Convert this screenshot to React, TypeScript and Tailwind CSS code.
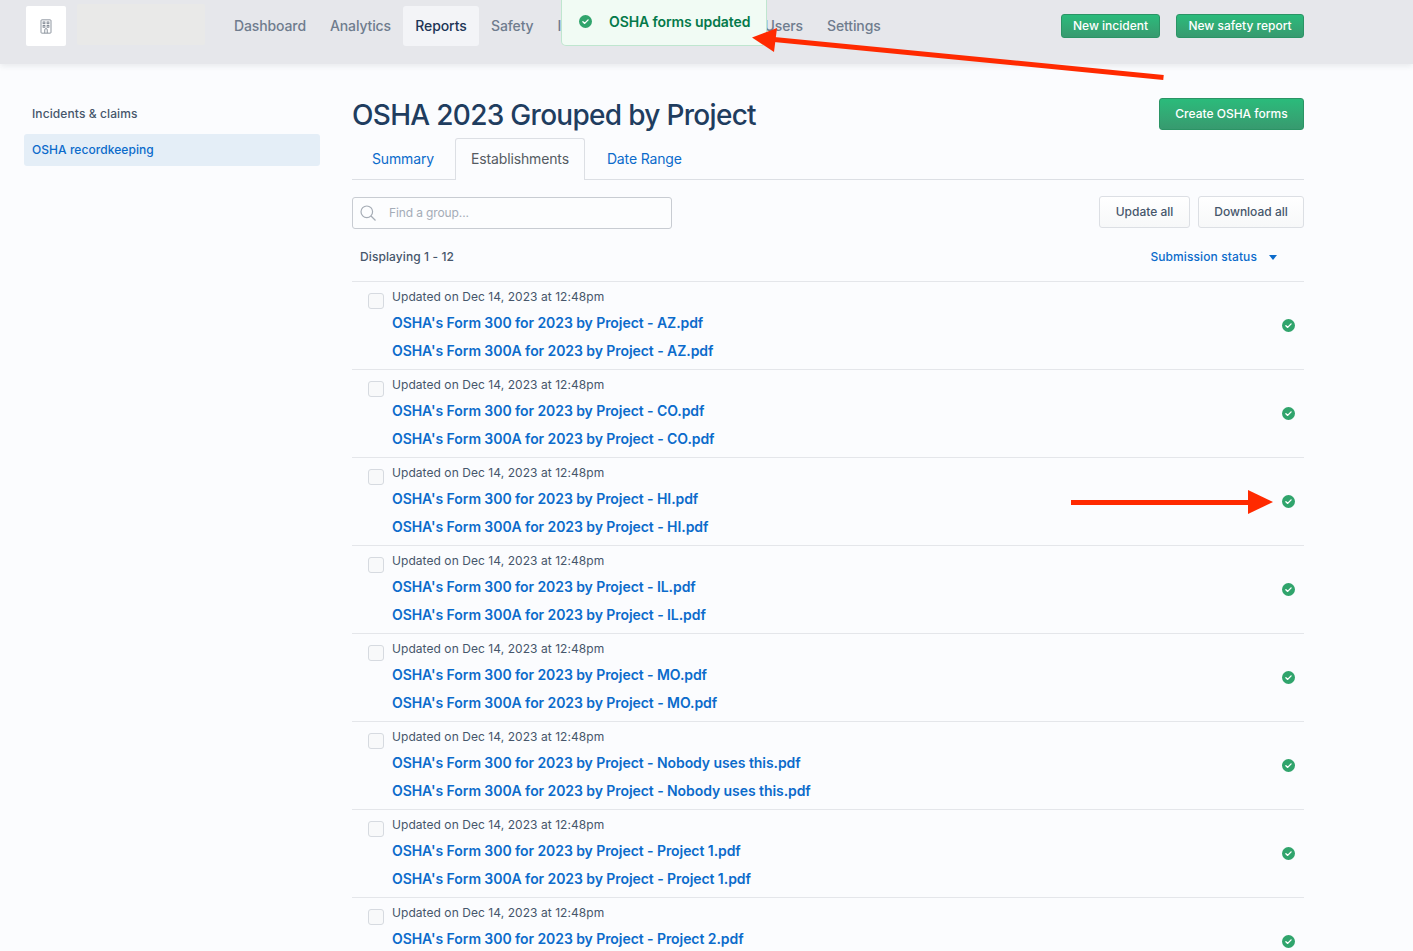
import React from "react";

const projects = ["AZ", "CO", "HI", "IL", "MO", "Nobody uses this", "Project 1", "Project 2"];

function Check({ className }: { className: string }) {
  return (
    <svg viewBox="0 0 16 16" className={className}>
      <circle cx="8" cy="8" r="8" fill="#30a46c" />
      <path d="M4.8 8.3 7 10.3 11.2 6" fill="none" stroke="#fff" strokeWidth="1.7" strokeLinecap="round" strokeLinejoin="round" />
    </svg>
  );
}

function GreenButton({ children, className }: { children: React.ReactNode; className: string }) {
  return (
    <button className={`rounded-[3px] border border-[#2b9465] bg-gradient-to-b from-[#2abb7b] to-[#379a6f] text-[12px] text-white font-medium ${className}`}>
      {children}
    </button>
  );
}

function Row({ name }: { name: string }) {
  return (
    <div className="flex h-[88px] border-t border-[#e4e6ea] pl-4 pr-[9px]">
      <div className="mt-[11px] h-4 w-4 shrink-0 rounded-[3px] border border-[#d6dae0] bg-[#f8f9fa]" />
      <div className="ml-2 flex-1">
        <div className="mt-[6px] h-[18px] text-[12px] leading-[18px] tracking-[0.06px] text-[#46566b]">Updated on Dec 14, 2023 at 12:48pm</div>
        <div className="mt-[3px] text-[14px] leading-[28px] font-semibold tracking-[-0.07px] text-[#0b6bcb]">
          <div>OSHA's Form 300 for 2023 by Project - {name}.pdf</div>
          <div>OSHA's Form 300A for 2023 by Project - {name}.pdf</div>
        </div>
      </div>
      <Check className="mt-[37px] h-[13px] w-[13px] shrink-0" />
    </div>
  );
}

export default function App() {
  return (
    <div className="relative h-screen overflow-hidden bg-[#fbfcfe] font-['Inter',sans-serif] text-[#3f4f63]">
      <header className="flex h-[64px] items-start justify-between bg-[#e6e7eb] pl-[26px] pr-[109px] shadow-[0_2px_6px_rgba(30,40,60,0.09)]">
        <div className="flex items-start">
          <div className="mt-[6px] flex h-10 w-10 items-center justify-center rounded-[2px] bg-white">
            <svg viewBox="0 0 14 18" className="h-[15px] w-3" fill="none" stroke="#7a828e" strokeWidth="1">
              <rect x="1" y="1" width="12" height="16" rx="1" />
              <rect x="3.5" y="3.5" width="2.2" height="2.2" />
              <rect x="8.3" y="3.5" width="2.2" height="2.2" />
              <rect x="3.5" y="7.7" width="2.2" height="2.2" />
              <rect x="8.3" y="7.7" width="2.2" height="2.2" />
              <path d="M5.5 17v-4a1.5 1.5 0 0 1 3 0v4" />
            </svg>
          </div>
          <div className="mt-1 ml-[11px] h-[41px] w-[128px] rounded-[2px] bg-[#e9e9e8]" />
          <nav className="mt-[6px] ml-[17px] flex text-[14px] font-medium tracking-[-0.12px] text-[#6f7c8e]">
            <a className="flex h-10 items-center px-3 pb-[2px]">Dashboard</a>
            <a className="flex h-10 items-center px-3 pb-[2px]">Analytics</a>
            <a className="flex h-10 w-[76px] items-center justify-center rounded-[3px] bg-[#f3f4f7] pb-[2px] text-[#1c3556]">Reports</a>
            <a className="flex h-10 items-center px-3 pb-[2px]">Safety</a>
            <a className="flex h-10 w-[212px] items-center px-3 pb-[2px]">Incidents</a>
            <a className="-ml-[5px] flex h-10 items-center px-3 pb-[2px]">Users</a>
            <a className="flex h-10 items-center px-3 pb-[2px]">Settings</a>
          </nav>
        </div>
        <div className="mt-[14px] flex gap-4">
          <GreenButton className="h-6 w-[99px]">New incident</GreenButton>
          <GreenButton className="h-6 w-[128px]">New safety report</GreenButton>
        </div>
      </header>

      <div className="flex pl-6 pr-[109px]">
        <aside className="mt-[34px] w-[296px] shrink-0 text-[12px] font-medium">
          <div className="flex h-8 items-center px-2 tracking-[0.1px] text-[#46566b]">Incidents &amp; claims</div>
          <div className="mt-1 flex h-8 items-center rounded-[3px] bg-[#e4eef7] px-2 tracking-[0.06px] text-[#0b6bcb]">OSHA recordkeeping</div>
        </aside>

        <main className="ml-8 flex-1">
          <div className="mt-[34px] flex h-8 items-start justify-between">
            <h1 className="text-[28px] leading-[34px] font-medium tracking-[-0.7px] text-[#1f3d5f]">OSHA 2023 Grouped by Project</h1>
            <GreenButton className="h-8 w-[145px]">Create OSHA forms</GreenButton>
          </div>

          <div className="mt-2 flex h-[42px] border-b border-[#dcdfe4] text-[14px] tracking-[-0.14px] text-[#0b6bcb]">
            <a className="flex h-[41px] w-[103px] items-center pl-5">Summary</a>
            <a className="-mb-px flex h-[42px] items-center rounded-t-[3px] border border-b-0 border-[#dcdfe4] bg-[#fbfcfe] px-[15px] pb-[2px] text-[#555b62]">Establishments</a>
            <a className="flex h-[41px] items-center pl-[22px]">Date Range</a>
          </div>

          <div className="mt-4 flex items-start justify-between">
            <div className="mt-px flex h-8 w-[320px] items-center rounded-[3px] border border-[#c8ccd2] bg-[#fcfdfe]">
              <svg viewBox="0 0 18 18" className="ml-[6px] h-[18px] w-[18px]" fill="none" stroke="#a5acb5" strokeWidth="1.2">
                <circle cx="7.8" cy="7.8" r="5.8" />
                <path d="m12 12 4.5 4.5" />
              </svg>
              <span className="ml-3 text-[12px] tracking-[-0.12px] text-[#a4acb7]">Find a group...</span>
            </div>
            <div className="flex gap-2">
              <button className="h-8 w-[91px] rounded-[3px] border border-[#dcdfe4] bg-gradient-to-b from-white to-[#f7f8f9] text-[12px] font-medium text-[#46566b]">Update all</button>
              <button className="h-8 w-[106px] rounded-[3px] border border-[#dcdfe4] bg-gradient-to-b from-white to-[#f7f8f9] text-[12px] font-medium text-[#46566b]">Download all</button>
            </div>
          </div>

          <div className="mt-4 flex h-[36px] items-start justify-between pl-2 text-[12px] font-medium leading-[18px] tracking-[0.1px]">
            <span className="mt-[3px] text-[#46566b]">Displaying 1 - 12</span>
            <span className="mt-[3px] flex items-center pr-[27px] text-[#0b6bcb]">
              Submission status
              <svg viewBox="0 0 8 5" className="ml-[12px] h-[5px] w-2" fill="#0b6bcb"><path d="M0 0h8L4 5z" /></svg>
            </span>
          </div>

          {projects.map((p) => (
            <Row key={p} name={p} />
          ))}
        </main>
      </div>

      <div className="absolute top-0 left-[561px] flex h-[46px] w-[206px] items-center rounded-b-[5px] border border-t-0 border-[#bfe6cf] bg-[#f1fbf4] pb-[2px] pl-[17px] text-[14px] font-semibold tracking-[-0.1px] text-[#04794a]">
        <Check className="h-[13px] w-[13px]" />
        <span className="ml-[17px]">OSHA forms updated</span>
      </div>

      <svg className="pointer-events-none absolute top-0 left-0 h-[951px] w-[1413px]" viewBox="0 0 1413 951" fill="#ff2a00">
        <path d="M752 37.5 777 28l-3 24z" />
        <path d="M774 39.5 1163.5 77.5" stroke="#ff2a00" strokeWidth="5" fill="none" />
        <rect x="1071" y="500" width="178" height="5" />
        <path d="M1248 490v24l25-12z" />
      </svg>
    </div>
  );
}
